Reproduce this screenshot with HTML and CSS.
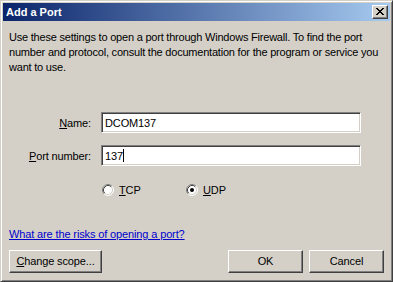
FILE: index.html
```html
<!DOCTYPE html>
<html>
<head>
<meta charset="utf-8">
<link rel="stylesheet" href="styles.css">
</head>
<body>
<div class="window">
  <div class="titlebar">
    <span class="title">Add a Port</span>
    <span class="close-btn">
      <svg width="8" height="7" viewBox="0 0 8 7"><path d="M0 0h2v1h1v1h2v-1h1v-1h2v1h-1v1h-1v1h-1v1h1v1h1v1h1v1h-2v-1h-1v-1h-2v1h-1v1h-2v-1h1v-1h1v-1h1v-1h-1v-1h-1v-1h-1z" fill="#000"/></svg>
    </span>
  </div>
  <div class="content">
    <p class="desc">Use these settings to open a port through Windows Firewall. To find the port number and protocol, consult the documentation for the program or service you want to use.</p>
    <div class="form">
      <label class="label"><u>N</u>ame:</label>
      <div class="field">DCOM137</div>
      <label class="label"><u>P</u>ort number:</label>
      <div class="field">137<span class="caret"></span></div>
    </div>
    <div class="radios">
      <span class="radio">
        <svg width="12" height="12" viewBox="0 0 12 12"><circle cx="6" cy="6" r="5" fill="#fff"/><path d="M2.11 9.89A5.5 5.5 0 0 1 9.89 2.11" fill="none" stroke="#808080"/><path d="M2.82 9.18A4.5 4.5 0 0 1 9.18 2.82" fill="none" stroke="#404040"/><path d="M9.89 2.11A5.5 5.5 0 0 1 2.11 9.89" fill="none" stroke="#fff"/><path d="M9.18 2.82A4.5 4.5 0 0 1 2.82 9.18" fill="none" stroke="#d4d0c8"/></svg>
        <span><u>T</u>CP</span>
      </span>
      <span class="radio">
        <svg width="12" height="12" viewBox="0 0 12 12"><circle cx="6" cy="6" r="5" fill="#fff"/><path d="M2.11 9.89A5.5 5.5 0 0 1 9.89 2.11" fill="none" stroke="#808080"/><path d="M2.82 9.18A4.5 4.5 0 0 1 9.18 2.82" fill="none" stroke="#404040"/><path d="M9.89 2.11A5.5 5.5 0 0 1 2.11 9.89" fill="none" stroke="#fff"/><path d="M9.18 2.82A4.5 4.5 0 0 1 2.82 9.18" fill="none" stroke="#d4d0c8"/><circle cx="6" cy="6" r="2" fill="#000"/></svg>
        <span><u>U</u>DP</span>
      </span>
    </div>
    <a class="link" href="#">What are the risks of opening a port?</a>
    <div class="buttons">
      <span class="btn btn-scope"><u>C</u>hange scope...</span>
      <span class="spacer"></span>
      <span class="btn">OK</span>
      <span class="btn">Cancel</span>
    </div>
  </div>
</div>
</body>
</html>
```
FILE: styles.css
```css
html, body {
  margin: 0;
  padding: 0;
  background: #d4d0c8;
}
body {
  font-family: "Liberation Sans", Arial, sans-serif;
  font-size: 11px;
  letter-spacing: -0.13px;
  color: #000;
}
.window {
  width: 393px;
  height: 282px;
  box-sizing: border-box;
  background: #d4d0c8;
  border: 1px solid;
  border-color: #d4d0c8 #404040 #404040 #d4d0c8;
  box-shadow: inset 1px 1px #fff, inset -1px -1px #808080;
  padding: 2px;
  display: flex;
  flex-direction: column;
}
.titlebar {
  height: 18px;
  flex: none;
  background: linear-gradient(to right, #0a246a, #a6caf0);
  display: flex;
  align-items: center;
  padding: 0 2px 0 3px;
}
.title {
  color: #fff;
  font-weight: bold;
  font-size: 11px;
  letter-spacing: 0;
  flex: 1;
}
.close-btn {
  width: 16px;
  height: 14px;
  box-sizing: border-box;
  background: #d4d0c8;
  border: 1px solid;
  border-color: #fff #404040 #404040 #fff;
  box-shadow: inset -1px -1px #808080;
  display: flex;
  align-items: center;
  justify-content: center;
  padding: 0 1px 1px 0;
}
.close-btn svg { display: block; }
.content {
  flex: 1;
  display: flex;
  flex-direction: column;
  padding: 9px 6px 6px 6px;
}
.desc {
  margin: 0;
  line-height: 15px;
  letter-spacing: -0.21px;
}
.form {
  display: grid;
  grid-template-columns: 82px 260px;
  column-gap: 10px;
  row-gap: 12px;
  align-items: center;
  margin-top: 37px;
}
.label {
  text-align: right;
}
.field {
  height: 21px;
  box-sizing: border-box;
  background: #fff;
  border: 1px solid;
  border-color: #808080 #fff #fff #808080;
  box-shadow: inset 1px 1px #404040, inset -1px -1px #d4d0c8;
  padding: 0 3px;
  display: flex;
  align-items: center;
}
.caret {
  display: inline-block;
  width: 1px;
  height: 13px;
  background: #000;
}
.radios {
  display: flex;
  margin: 18px 0 0 93px;
}
.radio {
  display: flex;
  align-items: center;
  gap: 5px;
  width: 84px;
}
.radio svg { display: block; }
.link {
  margin-top: 32px;
  color: #0000cc;
  text-decoration: underline;
  align-self: flex-start;
}
.buttons {
  margin-top: auto;
  display: flex;
  gap: 6px;
}
.spacer { flex: 1; }
.btn {
  width: 75px;
  height: 23px;
  box-sizing: border-box;
  border: 1px solid;
  border-color: #fff #404040 #404040 #fff;
  box-shadow: inset -1px -1px #808080;
  display: flex;
  align-items: center;
  justify-content: center;
  padding-bottom: 1px;
}
.btn-scope {
  width: 93px;
}
```
